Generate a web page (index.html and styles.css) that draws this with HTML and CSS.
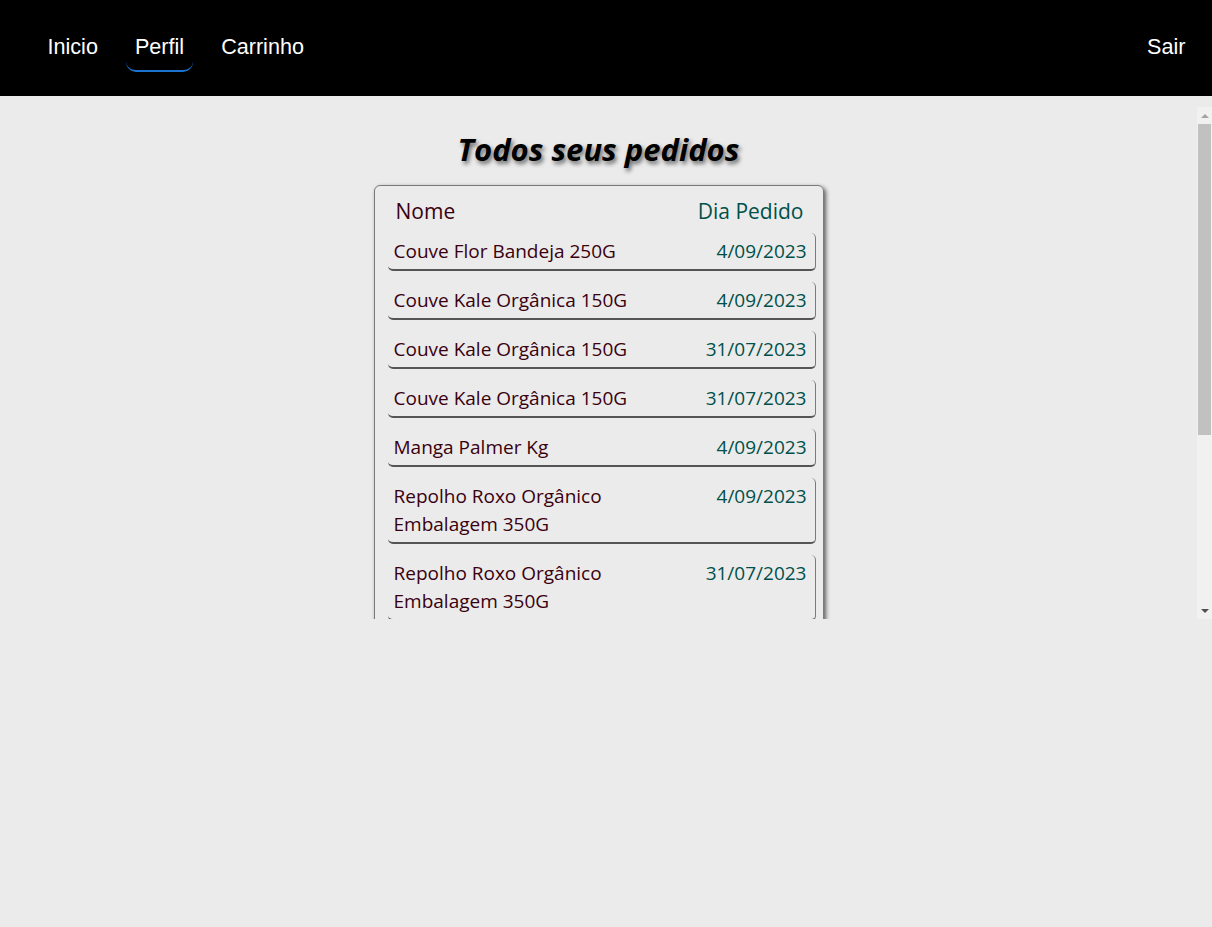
FILE: index.html
```html
<!DOCTYPE html>
<html lang="pt-BR">
<head>
<meta charset="utf-8">
<title>Pedidos</title>
<link rel="stylesheet" href="styles.css">
</head>
<body>
<nav class="navbar">
  <div class="nav-links">
    <a class="nav-item">Inicio</a>
    <a class="nav-item active">Perfil</a>
    <a class="nav-item">Carrinho</a>
  </div>
  <a class="nav-item logout">Sair</a>
</nav>
<div class="viewport">
  <main class="content">
    <h1 class="title">Todos seus pedidos</h1>
    <section class="card">
      <div class="card-head">
        <span class="head-name">Nome</span>
        <span class="head-date">Dia Pedido</span>
      </div>
      <div class="order"><span class="order-name">Couve Flor Bandeja 250G</span><span class="order-date">4/09/2023</span></div>
      <div class="order"><span class="order-name">Couve Kale Orgânica 150G</span><span class="order-date">4/09/2023</span></div>
      <div class="order"><span class="order-name">Couve Kale Orgânica 150G</span><span class="order-date">31/07/2023</span></div>
      <div class="order"><span class="order-name">Couve Kale Orgânica 150G</span><span class="order-date">31/07/2023</span></div>
      <div class="order"><span class="order-name">Manga Palmer Kg</span><span class="order-date">4/09/2023</span></div>
      <div class="order"><span class="order-name">Repolho Roxo Orgânico Embalagem 350G</span><span class="order-date">4/09/2023</span></div>
      <div class="order"><span class="order-name">Repolho Roxo Orgânico Embalagem 350G</span><span class="order-date">31/07/2023</span></div>
      <div class="order"><span class="order-name">Manga Palmer Kg</span><span class="order-date">31/07/2023</span></div>
      <div class="order"><span class="order-name">Couve Flor Bandeja 250G</span><span class="order-date">31/07/2023</span></div>
    </section>
  </main>
  <div class="scrollbar" aria-hidden="true">
    <div class="sb-btn"><span class="arrow-up"></span></div>
    <div class="sb-track"><div class="sb-thumb"></div></div>
    <div class="sb-btn"><span class="arrow-down"></span></div>
  </div>
</div>
</body>
</html>
```

FILE: styles.css
```css
html, body {
  margin: 0;
  padding: 0;
}
body {
  background: #ebebeb;
  height: 927px;
  overflow: hidden;
  font-family: "Open Sans", "Noto Sans", sans-serif;
}
.navbar {
  height: 96px;
  background: #000;
  display: flex;
  align-items: center;
  justify-content: space-between;
  padding: 0 18px 0 39px;
  box-sizing: border-box;
}
.nav-links {
  display: flex;
  gap: 20px;
}
.nav-item {
  font-family: "Liberation Sans", Arial, sans-serif;
  font-size: 21.6px;
  color: #fff;
  padding: 10px 8.5px;
  border-radius: 10px;
  border-bottom: 2px solid transparent;
  cursor: pointer;
}
.nav-item.active {
  border-bottom-color: #1a73d0;
}
.viewport {
  margin-top: 11px;
  height: 512px;
  display: flex;
}
.content {
  flex: 1;
  overflow: hidden;
  display: flex;
  flex-direction: column;
  align-items: center;
}
.scrollbar {
  width: 15px;
  background: #f1f1f1;
  display: flex;
  flex-direction: column;
}
.sb-btn {
  height: 17px;
  display: flex;
  align-items: center;
  justify-content: center;
}
.arrow-up {
  width: 0;
  height: 0;
  border-left: 4px solid transparent;
  border-right: 4px solid transparent;
  border-bottom: 4px solid #a3a3a3;
}
.arrow-down {
  width: 0;
  height: 0;
  border-left: 4px solid transparent;
  border-right: 4px solid transparent;
  border-top: 4px solid #505050;
}
.sb-track {
  flex: 1;
  padding: 0 1px;
}
.sb-thumb {
  height: 311px;
  background: #c1c1c1;
}
.title {
  margin: 22px 0 16px;
  font-size: 31px;
  font-weight: 700;
  font-style: italic;
  color: #000;
  text-shadow: 2px 3px 4px rgba(0, 0, 0, 0.55);
  line-height: 40px;
}
.card {
  width: 450px;
  box-sizing: border-box;
  border: 1px solid #7a7a7a;
  border-radius: 6px;
  box-shadow: 2px 2px 4px rgba(0, 0, 0, 0.6);
  padding: 8px 7px 14px 13px;
  margin-bottom: 16px;
  flex-shrink: 0;
}
.card-head {
  display: flex;
  justify-content: space-between;
  padding: 2px 12px 0 8px;
  font-size: 21px;
  line-height: 30px;
  height: 37px;
}
.head-name {
  color: #3a000e;
}
.head-date {
  color: #00504a;
}
.order {
  display: flex;
  justify-content: space-between;
  align-items: flex-start;
  padding: 4px 8px 4px 6px;
  margin-bottom: 11px;
  border-radius: 5px;
  border-right: 1px solid #7a7a7a;
  border-bottom: 2px solid #555;
  font-size: 19px;
  line-height: 28px;
}
.order-name {
  color: #3a000e;
  max-width: 270px;
}
.order-date {
  color: #00504a;
  white-space: nowrap;
}
```
